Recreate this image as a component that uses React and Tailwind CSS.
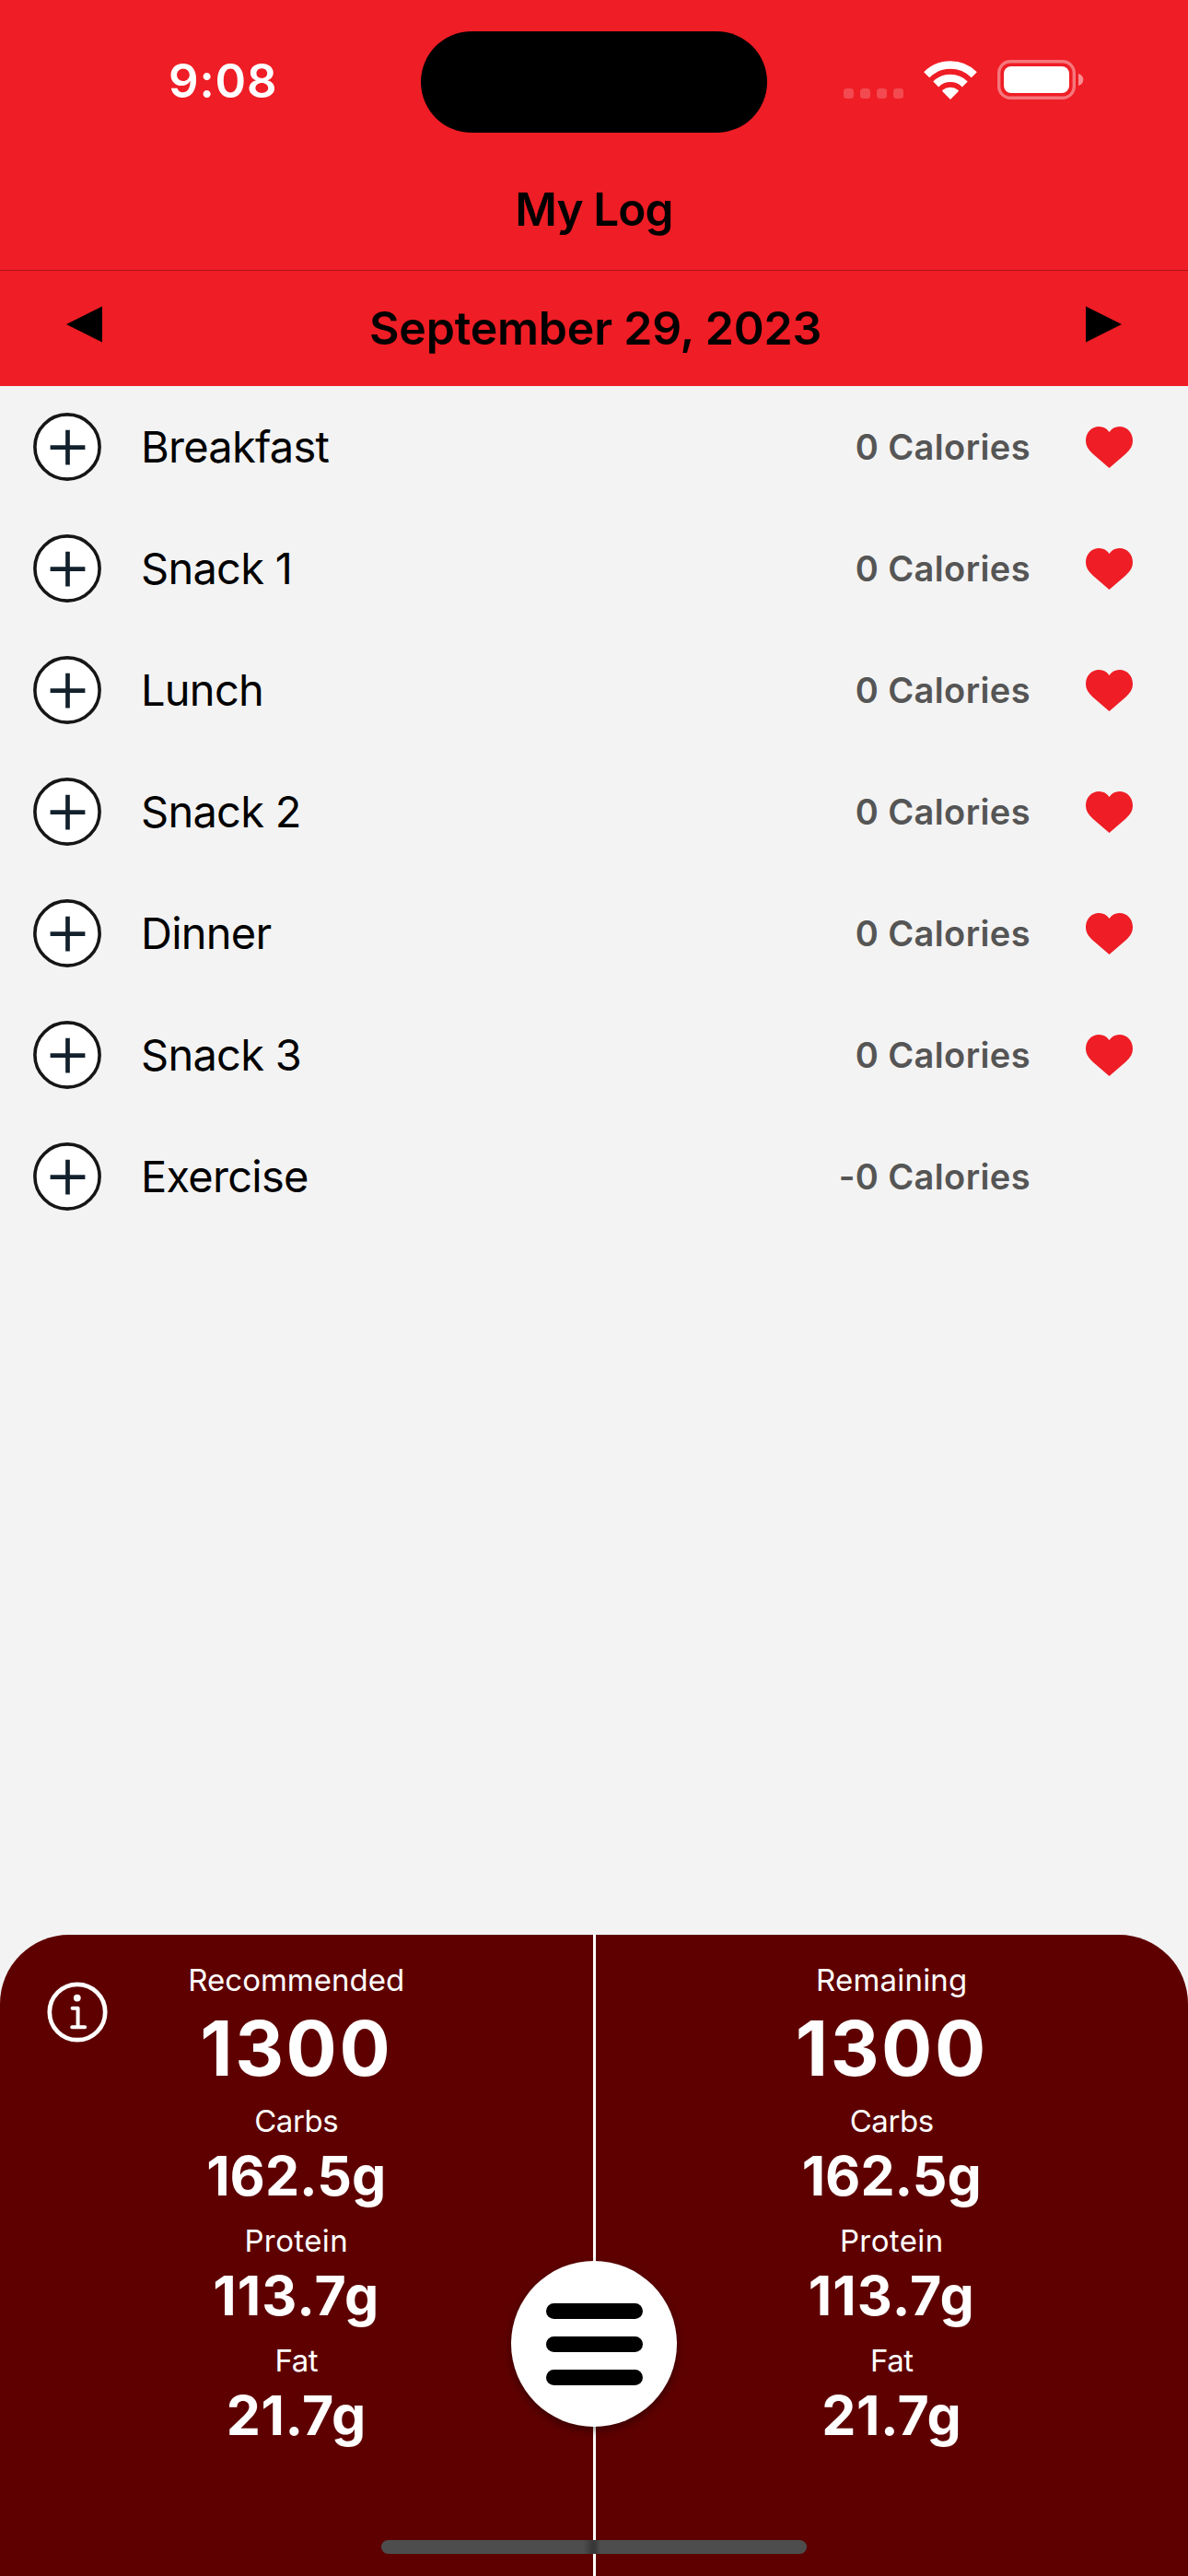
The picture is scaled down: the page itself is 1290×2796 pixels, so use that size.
const meals = [
  { name: "Breakfast", calories: "0 Calories", favorite: true },
  { name: "Snack 1", calories: "0 Calories", favorite: true },
  { name: "Lunch", calories: "0 Calories", favorite: true },
  { name: "Snack 2", calories: "0 Calories", favorite: true },
  { name: "Dinner", calories: "0 Calories", favorite: true },
  { name: "Snack 3", calories: "0 Calories", favorite: true },
  { name: "Exercise", calories: "-0 Calories", favorite: false },
];

const macros = [
  { label: "Carbs", value: "162.5g", labelSpacing: "tracking-[-0.4px]", valueSpacing: "" },
  { label: "Protein", value: "113.7g", labelSpacing: "tracking-[0.4px]", valueSpacing: "tracking-[1.1px]" },
  { label: "Fat", value: "21.7g", labelSpacing: "tracking-[-0.5px]", valueSpacing: "tracking-[0.5px]" },
];

function WifiIcon() {
  return (
    <svg className="h-[42px] w-[58px]" viewBox="0 0 58 42" fill="none">
      <path d="M3.2 15.2a36.5 36.5 0 0 1 51.6 0" stroke="white" strokeWidth="8.6" />
      <path d="M13.2 25.4a22.4 22.4 0 0 1 31.6 0" stroke="white" strokeWidth="8.4" />
      <path d="M29 42l-8.4-8.5c-.5-.5-.5-1.3 0-1.7a12.8 12.8 0 0 1 16.8 0c.5.4.5 1.2 0 1.7z" fill="white" />
    </svg>
  );
}

function BatteryIcon() {
  return (
    <svg className="h-[43px] w-[94px]" viewBox="0 0 94 43" fill="none">
      <rect x="1.7" y="1.7" width="81.6" height="39.6" rx="12.5" stroke="white" strokeOpacity="0.4" strokeWidth="3.4" />
      <rect x="7" y="7" width="71" height="29" rx="8" fill="white" />
      <path d="M88 15c3.6 1.2 5.3 3.6 5.3 6.5S91.6 26.8 88 28z" fill="white" fillOpacity="0.5" />
    </svg>
  );
}

function AddButton() {
  return (
    <button className="h-[74px] w-[74px]" aria-label="Add">
      <svg className="h-[74px] w-[74px]" viewBox="0 0 74 74" fill="none">
        <circle cx="37" cy="37" r="35.1" fill="white" stroke="#161616" strokeWidth="3.6" />
        <path d="M37.5 18.8v37.8M18.6 37.7h37.8" stroke="#13212d" strokeWidth="4.7" />
      </svg>
    </button>
  );
}

function HeartIcon() {
  return (
    <svg className="h-[45px] w-[51px]" viewBox="0 0 51 45">
      <path
        d="M25.5 45L7.500 29.500C2.500 25 0 20.500 0 15.500 0 6.500 6 0 14.500 0c4.500 0 8.500 2 11 6C28 2 32 0 36.500 0 45 0 51 6.500 51 15.500c0 5-2.500 9.500-7.500 14z"
        fill="#ef1d25"
      />
    </svg>
  );
}

function InfoIcon() {
  return (
    <svg className="h-[66px] w-[66px]" viewBox="0 0 66 66" fill="none">
      <circle cx="33" cy="33" r="30.2" stroke="white" strokeWidth="4.7" />
      <circle cx="32.8" cy="17.6" r="3.9" fill="white" />
      <path d="M27.6 28.800h6v20.500M27.200 49.300h14" stroke="white" strokeWidth="4" strokeLinecap="round" strokeLinejoin="round" />
    </svg>
  );
}

function StatusBar() {
  return (
    <div className="flex h-[177px] items-center">
      <div className="w-[457px] pl-[183px] text-[51px] font-semibold tracking-[0.8px] text-white">9:08</div>
      <div className="mt-px h-[110px] w-[376px] rounded-full bg-black" />
      <div className="mb-[4px] ml-[83px] flex h-[43px] items-end gap-[7px]">
        {[0, 1, 2, 3].map((dot) => (
          <span key={dot} className="mb-px h-[11px] w-[11px] rounded-[3.5px] bg-white/20" />
        ))}
      </div>
      <div className="mb-[4px] ml-[22px] flex items-center gap-[22px]">
        <WifiIcon />
        <BatteryIcon />
      </div>
    </div>
  );
}

function Header() {
  return (
    <header className="bg-[#ef1d25]">
      <StatusBar />
      <h1 className="flex h-[116px] items-center justify-center pb-[15px] text-[49.5px] font-semibold tracking-[-0.9px]">
        My Log
      </h1>
      <div className="flex h-[126px] items-center justify-between border-t border-[#ab151b] px-[72px]">
        <button className="pb-[10px]" aria-label="Previous day">
          <svg className="h-[40px] w-[39px]" viewBox="0 0 39 40">
            <path d="M0 20L39 0.5v39z" />
          </svg>
        </button>
        <h2 className="pl-[3px] text-[50px] font-semibold tracking-[-0.2px]">September 29, 2023</h2>
        <button className="pb-[10px]" aria-label="Next day">
          <svg className="h-[40px] w-[39px]" viewBox="0 0 39 40">
            <path d="M39 20L0 0.5v39z" />
          </svg>
        </button>
      </div>
    </header>
  );
}

function MealRow({ name, calories, favorite }) {
  return (
    <li className="flex h-[132px] items-center pr-[60px] pl-[36px]">
      <AddButton />
      <span className="flex-1 pl-[43px] text-[47px] tracking-[-0.75px]">{name}</span>
      <span className="text-[38px] font-semibold tracking-[0.4px] text-[#555555]">{calories}</span>
      <span className="ml-[60px] flex w-[51px]">{favorite && <HeartIcon />}</span>
    </li>
  );
}

function MacroColumn({ title, titleSpacing }) {
  return (
    <section className="flex flex-1 flex-col items-center pt-[27px]">
      <div className={`text-[33px] leading-[44px] ${titleSpacing}`}>{title}</div>
      <div className="mb-[4px] pt-px text-[82px] leading-[104px] font-bold tracking-[2.5px]">1300</div>
      {macros.map((m) => (
        <div key={m.label} className="mb-[11px] flex flex-col items-center">
          <div className={`text-[33px] leading-[44px] ${m.labelSpacing}`}>{m.label}</div>
          <div className={`text-[59px] leading-[75px] font-bold ${m.valueSpacing}`}>{m.value}</div>
        </div>
      ))}
    </section>
  );
}

function SummaryPanel() {
  return (
    <footer className="relative flex h-[696px] rounded-t-[75px] bg-[#5e0000] text-white">
      <MacroColumn title="Recommended" titleSpacing="" />
      <div className="w-[3px] bg-white" />
      <MacroColumn title="Remaining" titleSpacing="tracking-[0.2px]" />
      <button className="absolute top-[51px] left-[50.5px]" aria-label="Info">
        <InfoIcon />
      </button>
      <button
        className="absolute top-[354px] left-[555px] flex h-[180px] w-[180px] flex-col items-center justify-center gap-[19px] rounded-full bg-white pt-px shadow-[0_4px_10px_rgba(0,0,0,0.4)]"
        aria-label="Menu"
      >
        <span className="h-[17px] w-[105px] rounded-full bg-black" />
        <span className="h-[17px] w-[105px] rounded-full bg-black" />
        <span className="h-[17px] w-[105px] rounded-full bg-black" />
      </button>
      <div className="absolute bottom-[24px] left-[414px] h-[15px] w-[462px] rounded-full bg-[linear-gradient(90deg,#4d4d4d_47.5%,#383838_49.6%,#383838_50.2%,#4d4d4d_51.5%)]" />
    </footer>
  );
}

export default function App() {
  return (
    <div className="flex h-[2796px] w-[1290px] flex-col overflow-hidden bg-[#f3f3f3] font-['Inter',sans-serif] text-black">
      <Header />
      <ul className="flex-1">
        {meals.map((meal) => (
          <MealRow key={meal.name} {...meal} />
        ))}
      </ul>
      <SummaryPanel />
    </div>
  );
}
